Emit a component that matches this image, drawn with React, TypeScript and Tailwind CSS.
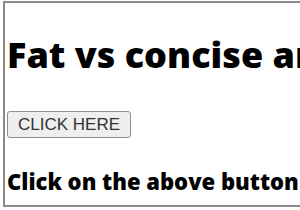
export default function App() {
  return (
    <div className="w-[300px] h-[210px] overflow-hidden bg-white">
      <div className="ml-[3px] mt-[1px] w-[320px] h-[206px] border-2 border-[#8a8a8a] bg-white pl-[2px] overflow-hidden font-['Open_Sans',sans-serif]">
        <h1 className="mt-[28px] text-[36px] leading-[48px] font-extrabold text-black whitespace-nowrap">
          Fat vs concise arrow functions
        </h1>
        <button className="mt-[32px] h-[27px] px-[10px] rounded-[3px] border border-[#8f8f8f] bg-[#efefef] text-[17px] text-[#333] leading-none font-['Liberation_Sans',Arial,sans-serif]">
          CLICK HERE
        </button>
        <p className="mt-[29px] text-[22px] leading-[28px] font-extrabold text-black whitespace-nowrap">
          Click on the above button to see the result
        </p>
      </div>
    </div>
  );
}
